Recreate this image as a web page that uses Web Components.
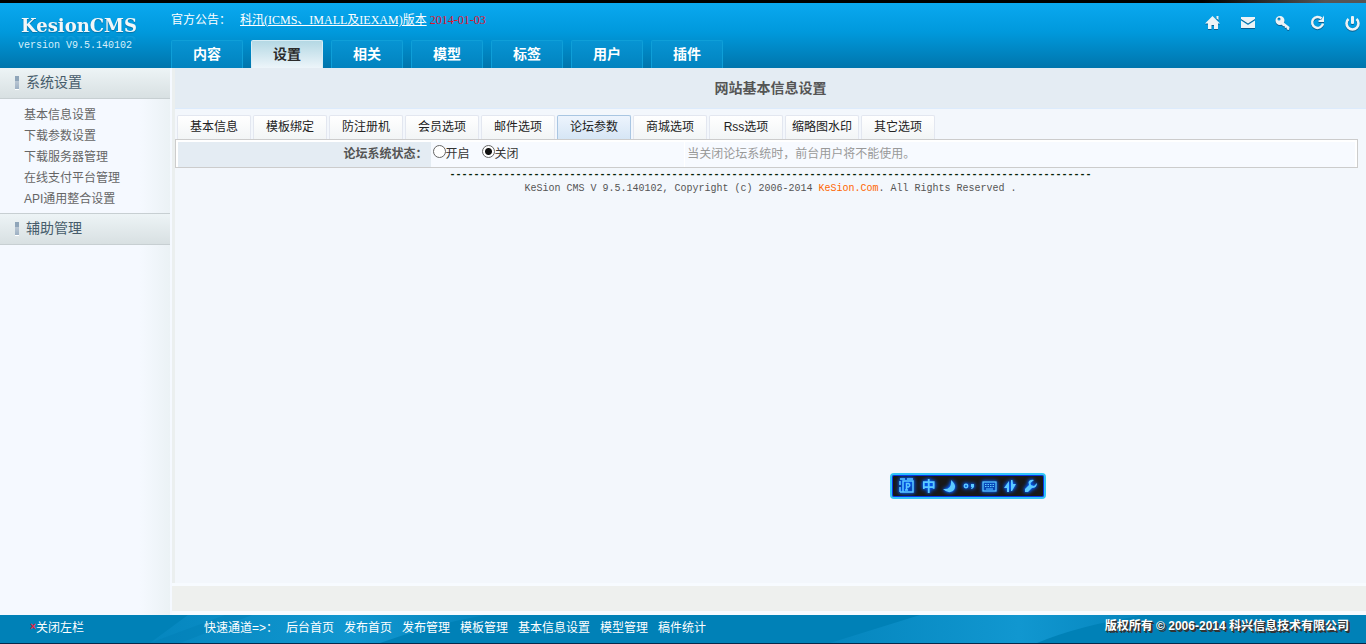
<!DOCTYPE html>
<html lang="zh-CN">
<head>
<meta charset="utf-8">
<title>KesionCMS</title>
<style>
html, body { margin: 0; }
body { font: 12px/16px "Liberation Sans", "Noto Sans CJK SC", sans-serif; color: #333; background: #f3f7fc; }
</style>
</head>
<body>
<cms-app></cms-app>
<script>
function define(name, html, setup) {
  const t = document.createElement('template');
  t.innerHTML = html;
  customElements.define(name, class extends HTMLElement {
    constructor() {
      super();
      this.attachShadow({ mode: 'open' }).append(t.content.cloneNode(true));
    }
    connectedCallback() { if (setup) setup(this, this.shadowRoot); }
  });
}

define('nav-tab', `
<style>
:host { display: block; width: 72px; }
a { display: block; box-sizing: border-box; height: 28px; border: 1px solid #0f9fd8; border-bottom: 0; border-radius: 2px 2px 0 0;
  background: linear-gradient(#0794d3, #0283bf); color: #fff; font-size: 14px; font-weight: bold; line-height: 26px; text-align: center; text-decoration: none; }
:host([active]) a { background: linear-gradient(#b4d8e4, #edf5fa); border-color: #d9edf5; color: #2b2b2b; }
</style>
<a href="#"><slot></slot></a>`);

define('tool-icons', `
<style>
:host { display: flex; gap: 19px; }
a { display: block; width: 16px; height: 16px; }
svg { display: block; overflow: visible; fill: #edf3f6; stroke: none; filter: drop-shadow(0 1px 0 #0a5f90); }
</style>
<a href="#" aria-label="首页"><svg width="16" height="16"><path d="M8.500 1 16 8.500H14V14H10V10H7.500V14H4V8.500H1Z"/><path d="M12.500 1H14.500V5L12.500 3.500Z"/></svg></a>
<a href="#" aria-label="邮件"><svg width="16" height="16"><path d="M2 2H16V4L9 8.500 2 4Z"/><path d="M2 5.500 9 10 16 5.500V13H2Z"/></svg></a>
<a href="#" aria-label="密码"><svg width="16" height="16"><path fill-rule="evenodd" d="M6 1A4.500 4.500 0 1 0 6 10A4.500 4.500 0 1 0 6 1ZM5 2.500A1.500 1.500 0 1 1 5 5.500A1.500 1.500 0 1 1 5 2.500Z"/><path d="M9 7 15.500 12 15 15 13 14.500 12.500 12.500 11 13 10.500 11 9 11.300 7.500 9Z"/></svg></a>
<a href="#" aria-label="刷新"><svg width="16" height="16"><path d="M12.500 3.500A5.500 5.500 0 1 0 14 8.500" style="fill:none;stroke:#edf3f6;stroke-width:2.500"/><path d="M15 .5V7H9.500V5.500L12.500 4.500Z"/></svg></a>
<a href="#" aria-label="退出"><svg width="16" height="16"><path d="M4.500 4A6 6 0 1 0 12.500 4" style="fill:none;stroke:#edf3f6;stroke-width:2.600"/><rect x="7" y="1" width="3" height="8" rx="1"/></svg></a>`);

define('app-header', `
<style>
:host { display: block; }
.edge { height: 3px; background: linear-gradient(90deg, #000 88%, #555 97%); }
header { display: flex; height: 65px; background: linear-gradient(#0aa8f0, #0099dc 45%, #0075ac); color: #fff; }
.brand { width: 171px; flex: none; box-sizing: border-box; padding: 11px 0 0 18px; }
.logo { font: bold 18px/24px "DejaVu Serif", serif; padding-left: 3px; color: #f2f7f9; text-shadow: 0 1px 1px #0670a4; -webkit-box-reflect: below -8px linear-gradient(transparent 50%, rgba(255,255,255,.15)); }
.ver { font: 10px/16px "Liberation Mono", monospace; color: #d7f0fb; }
.mid { flex: 1; display: flex; flex-direction: column; justify-content: space-between; }
.news { display: flex; padding-top: 9px; line-height: 16px; }
.news span { width: 69px; }
.news a { color: #fff; margin-right: 3px; }
.news a, .news time { font-family: "Liberation Serif", "Noto Sans CJK SC", serif; }
time { color: #e2102c; }
nav { display: flex; gap: 8px; }
tool-icons { padding: 12px 6px 0 0; }
</style>
<div class="edge"></div>
<header>
<div class="brand"><div class="logo">KesionCMS</div><div class="ver">version V9.5.140102</div></div>
<div class="mid">
<div class="news"><span>官方公告：</span><a href="#">科汛(ICMS、IMALL及IEXAM)版本</a><time>2014-01-03</time></div>
<nav><nav-tab>内容</nav-tab><nav-tab active>设置</nav-tab><nav-tab>相关</nav-tab><nav-tab>模型</nav-tab><nav-tab>标签</nav-tab><nav-tab>用户</nav-tab><nav-tab>插件</nav-tab></nav>
</div>
<tool-icons></tool-icons>
</header>`);

define('side-group', `
<style>
:host { display: block; }
h2 { margin: 0; display: flex; box-sizing: border-box; align-items: center; gap: 7px; height: 31px; padding: 0 0 2px 15px; border-bottom: 1px solid #c7cfd2;
  background: linear-gradient(#edf4f6, #d8e0e2); font-size: 14px; font-weight: normal; line-height: 20px; color: #465c6b; }
h2::before { content: ""; width: 4px; height: 13px; background: linear-gradient(#8fa5b9 40%, #b9c6d3 40%, #9db0c3); box-shadow: 0 1px 0 #fff; }
:host([divided]) h2 { height: 32px; border-top: 1px solid #c7cfd2; }
.items { display: flex; flex-direction: column; }
:host(:not([divided])) .items { padding: 6px 0 3px 24px; }
</style>
<h2><slot name="title"></slot></h2><div class="items"><slot></slot></div>`);

define('side-link', `
<style>
:host { display: block; }
a { display: block; line-height: 21px; color: #666; text-decoration: none; }
</style><a href="#"><slot></slot></a>`);

define('option-tab', `
<style>
:host { display: block; width: 74px; }
button { display: block; box-sizing: border-box; width: 100%; height: 24px; padding: 0 0 2px; border: 1px solid #e3e7f0; border-bottom: 0; border-radius: 2px 2px 0 0;
  background: linear-gradient(#fff, #f2f5f6); font: inherit; line-height: 20px; color: #222; text-align: center; white-space: nowrap; }
:host([active]) button { background: linear-gradient(#edf4fd, #d6e6f5); border-color: #a9c6e2; }
</style><button type="button" role="tab"><slot></slot></button>`);

define('status-row', `
<style>
:host { display: block; }
form { display: grid; grid-template-columns: 253fr 254fr 672fr; height: 23px; padding: 2px; border: 1px solid #ccc; background: #fff; line-height: 25px; }
.name { background: #e4ecf3; text-align: right; padding-right: 3px; font-weight: bold; color: #555; }
.choices { display: flex; gap: 12px; padding-left: 2px; background: #f7faff; }
label { display: flex; }
input { appearance: none; box-sizing: border-box; width: 13px; height: 13px; margin: 3px 0 0; border: 1px solid #666; border-radius: 50%; background: #fff; }
input:checked { background: radial-gradient(circle, #111 3px, #fff 4px); }
.hint { padding-left: 2px; background: #f7faff; border-left: 1px solid #fff; color: #999; }
</style>
<form>
<div class="name" id="state">论坛系统状态：</div>
<div class="choices" role="radiogroup" aria-labelledby="state"><label><input type="radio" name="s">开启</label><label><input type="radio" name="s" checked>关闭</label></div>
<div class="hint">当关闭论坛系统时，前台用户将不能使用。</div>
</form>`);

define('page-content', `
<style>
:host { display: flex; flex-direction: column; border-left: 3px solid #ebefef; background: #f3f7fc; }
h1 { margin: 0; height: 40px; border-bottom: 1px solid #dcebfc; background: #e4ecf3; font-size: 14px; line-height: 40px; text-align: center; color: #555; }
.tabs { display: flex; gap: 2px; padding: 6px 0 0 2px; }
status-row { margin-right: 8px; }
.copy { font: 10px/16px "Liberation Mono", monospace; text-align: center; color: #555; white-space: pre; }
.copy.rule { line-height: 13px; color: #052505; font-weight: bold; }
a { color: #f60; text-decoration: none; }
</style>
<h1>网站基本信息设置</h1>
<div class="tabs" role="tablist"><option-tab>基本信息</option-tab><option-tab>模板绑定</option-tab><option-tab>防注册机</option-tab><option-tab>会员选项</option-tab><option-tab>邮件选项</option-tab><option-tab active>论坛参数</option-tab><option-tab>商城选项</option-tab><option-tab>Rss选项</option-tab><option-tab>缩略图水印</option-tab><option-tab>其它选项</option-tab></div>
<status-row></status-row>
<div class="copy rule"></div>
<div class="copy">KeSion CMS V 9.5.140102, Copyright (c) 2006-2014 <a href="#">KeSion.Com</a>. All Rights Reserved .</div>`,
(el, root) => { root.querySelector('.rule').textContent = '-'.repeat(107); });

define('app-footer', `
<style>
:host { display: block; }
footer { position: relative; display: flex; box-sizing: border-box; height: 29px; border-bottom: 1px solid #06284a; background: #0081b7; color: #fff; line-height: 26px; overflow: hidden; }
svg { position: absolute; inset: 0; width: 100%; height: 100%; }
a { color: inherit; text-decoration: none; }
button { position: relative; width: 204px; flex: none; padding: 0 0 0 30px; border: 0; background: none; font: inherit; line-height: 26px; color: inherit; text-align: left; display: flex; height: 26px; }
i { font-style: normal; font-size: 10px; line-height: 24px; font-weight: bold; color: #f0203c; width: 6px; }
nav { position: relative; display: flex; gap: 10px; flex: 1; white-space: nowrap; }
nav span { width: 72px; }
small { position: relative; font-size: 12px; line-height: 22px; font-weight: bold; margin-right: 17px; text-shadow: 1px 1px 0 #333, 2px 2px 0 #333; }
</style>
<footer>
<svg viewBox="0 0 1366 28" preserveAspectRatio="none" aria-hidden="true">
<defs><linearGradient id="g"><stop offset="0" stop-color="#0586be"/><stop offset=".6" stop-color="#1197d0"/><stop offset="1" stop-color="#0585bd"/></linearGradient></defs>
<path d="M188 0H485Q430 10 380 28H150Z" fill="url(#g)"/><path d="M225 0H252L180 28H150Z" fill="#007eb5" opacity=".4"/>
<path d="M920 0H1145Q1080 10 1037 28H830Z" fill="url(#g)"/></svg>
<button type="button"><i>×</i>关闭左栏</button>
<nav><span>快速通道=&gt;：</span><a href="#">后台首页</a><a href="#">发布首页</a><a href="#">发布管理</a><a href="#">模板管理</a><a href="#">基本信息设置</a><a href="#">模型管理</a><a href="#">稿件统计</a></nav>
<small>版权所有 © 2006-2014 科兴信息技术有限公司</small>
</footer>`);

define('ime-bar', `
<style>
:host { position: fixed; right: 320px; bottom: 145px; box-sizing: border-box; width: 156px; height: 26px; padding: 0 6px; display: flex; align-items: center; justify-content: space-between;
  border: 2px solid #31c5f8; border-radius: 4px; background: #191919; box-shadow: inset 0 0 0 1px #0637e8; color: #5cc9ff; }
svg, b { display: block; filter: drop-shadow(0 0 2px #005cff) drop-shadow(0 0 1px #005cff); }
svg { fill: none; stroke: currentColor; stroke-width: 1.500; }
b { font-size: 14px; line-height: 20px; }
.f { fill: currentColor; stroke: none; }
</style>
<svg width="17" height="16"><path d="M5 3H15V14H5ZM2 1H7M9 1H15M2 3V7M2 9V14M2 14H5" /><path d="M8.500 12V5.500H10.500Q13 7 10.500 9H8.500M7 12H10"/></svg>
<b>中</b>
<svg width="14" height="14"><path class="f" d="M9 1Q16 7 11 12Q6 15 1 10Q10 11 9 1Z"/></svg>
<svg width="12" height="14"><circle cx="3" cy="7" r="1.700"/><path class="f" d="M8 5H11V8L9 10H8L9 8H8Z"/></svg>
<svg width="15" height="14"><rect x="1" y="3" width="13" height="9" stroke-width="1.200"/><path d="M3 5.500H12M3 7.500H12" stroke-width="1" stroke-dasharray="1.500 1"/><path d="M4 10H11" stroke-width="1"/></svg>
<svg width="14" height="14"><path class="f" d="M6 2V13H4V9H1ZM8 1H9.500L10 5H13L9 12H8Z"/></svg>
<svg width="14" height="14"><path class="f" d="M13 4 10 7 7 6 6.500 4 10 1Q6 0 4.500 3L5 6 1 10V13H4L8 9Q13 9 13 4Z" /></svg>`);

define('cms-app', `
<style>
:host { display: flex; flex-direction: column; min-height: 100vh; }
.body { flex: 1; display: flex; }
aside { width: 172px; flex: none; background: linear-gradient(90deg, #f5f9ff 140px, #ebf2f5 170px, #f5f9ff 170px); }
side-group { width: 170px; }
.main { flex: 1; min-width: 0; display: flex; flex-direction: column; }
page-content { flex: 1; }
.strip { height: 25px; border: solid #f7fbff; border-width: 3px 0 4px; background: #eef0ee; }
</style>
<app-header></app-header>
<div class="body">
<aside>
<side-group><span slot="title">系统设置</span><side-link>基本信息设置</side-link><side-link>下载参数设置</side-link><side-link>下载服务器管理</side-link><side-link>在线支付平台管理</side-link><side-link>API通用整合设置</side-link></side-group>
<side-group divided><span slot="title">辅助管理</span></side-group>
</aside>
<div class="main"><page-content></page-content><div class="strip"></div></div>
</div>
<app-footer></app-footer>
<ime-bar></ime-bar>`);
</script>
</body>
</html>
